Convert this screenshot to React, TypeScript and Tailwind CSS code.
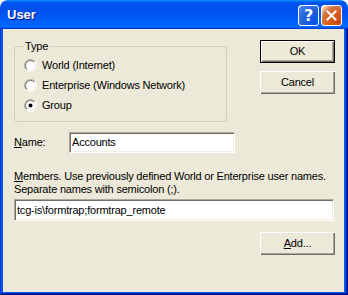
import React from "react";

const font = "font-['Liberation_Sans',Arial,sans-serif]";

const Radio = ({ checked }: { checked?: boolean }) => (
  <svg width="13" height="13" viewBox="0 0 13 13">
    <defs>
      <linearGradient id="ro" x1="0" y1="0" x2="1" y2="1">
        <stop offset="0.45" stopColor="#aca899" />
        <stop offset="0.55" stopColor="#ffffff" />
      </linearGradient>
      <linearGradient id="ri" x1="0" y1="0" x2="1" y2="1">
        <stop offset="0.45" stopColor="#716f64" />
        <stop offset="0.55" stopColor="#f1efe2" />
      </linearGradient>
    </defs>
    <circle cx="6.5" cy="6.5" r="6" fill="none" stroke="url(#ro)" strokeWidth="1" />
    <circle cx="6.5" cy="6.5" r="5" fill="#fff" stroke="url(#ri)" strokeWidth="1" />
    {checked && <circle cx="6.5" cy="6.5" r="2" fill="#000" />}
  </svg>
);

const Button = ({ children, primary }: { children: React.ReactNode; primary?: boolean }) => (
  <div
    className={
      primary
        ? "w-[75px] h-[23px] border border-black bg-[#ece9d8] flex items-center justify-center shadow-[inset_1px_1px_0_#fff,inset_-1px_-1px_0_#716f64,inset_-2px_-2px_0_#aca899]"
        : "w-[75px] h-[23px] bg-[#ece9d8] flex items-center justify-center shadow-[inset_1px_1px_0_#fff,inset_-1px_-1px_0_#716f64,inset_-2px_-2px_0_#aca899]"
    }
  >
    {children}
  </div>
);

const TextBox = ({ value, className }: { value: string; className: string }) => (
  <div
    className={
      "bg-white flex items-center pl-[1px] border border-t-[#aca899] border-l-[#aca899] border-r-white border-b-white shadow-[inset_1px_1px_0_#716f64,inset_-1px_-1px_0_#f1efe2] " +
      className
    }
  >
    <span className="pl-[1px]">{value}</span>
  </div>
);

export default function App() {
  return (
    <div className="w-[348px] h-[295px] bg-white">
      <div className={`w-[348px] h-[295px] flex flex-col rounded-t-[8px] overflow-hidden text-[11px] tracking-[-0.2px] text-black ${font}`}>
        {/* title bar */}
        <div className="h-[29px] flex items-center pl-[7px] pr-[6px] bg-[linear-gradient(180deg,#0997ff,#0053ee_8%,#0050ee_40%,#06f_88%,#06f_93%,#005bff_95%,#003dd7_96%,#003dd7)]">
          <span className="text-white font-bold text-[13px] tracking-normal [text-shadow:1px_1px_#0f1089] mt-[1px]">User</span>
          <div className="ml-auto flex gap-[2px] mt-[2px]">
            <div className="w-[21px] h-[21px] rounded-[3px] border border-white bg-[radial-gradient(circle_at_90%_90%,#0054e9,#2263d5_55%,#4480f4_90%,#fff)] flex items-center justify-center">
              <span className="text-white font-bold text-[16px] leading-none font-['DejaVu_Sans',sans-serif]">?</span>
            </div>
            <div className="w-[21px] h-[21px] rounded-[3px] border border-white bg-[radial-gradient(circle_at_90%_90%,#cc4600,#dc6527_55%,#cd7546_70%,#ffccb2_90%,#fff)] flex items-center justify-center">
              <svg width="11" height="11" viewBox="0 0 11 11">
                <path d="M1.5 1.5 L9.5 9.5 M9.5 1.5 L1.5 9.5" stroke="#fff" strokeWidth="2" strokeLinecap="square" />
              </svg>
            </div>
          </div>
        </div>

        {/* window frame */}
        <div className="flex-1 flex pl-[3px] pr-[4px] pb-[3px] bg-[#0058ee] shadow-[inset_1px_0_0_#0831d9,inset_-1px_-1px_0_#00138c,inset_-2px_-2px_0_#001ea0]">
          <div className="flex-1 bg-[#ece9d8] flex flex-col">
            <div className="flex items-start">
              <fieldset className="ml-[11px] mt-[11px] w-[213px] h-[82px] border border-[#d0d0bf] rounded-[3px]">
                <legend className="ml-[8px] px-[2px] leading-[13px]">Type</legend>
                <div className="pl-[9px] pt-[6px] flex flex-col gap-[7px]">
                  <div className="flex items-center gap-[5px] h-[13px]">
                    <Radio />
                    <span>World (Internet)</span>
                  </div>
                  <div className="flex items-center gap-[5px] h-[13px]">
                    <Radio />
                    <span>Enterprise (Windows Network)</span>
                  </div>
                  <div className="flex items-center gap-[5px] h-[13px]">
                    <Radio checked />
                    <span>Group</span>
                  </div>
                </div>
              </fieldset>
              <div className="ml-auto mr-[9px] mt-[11px] flex flex-col gap-[8px]">
                <Button primary>OK</Button>
                <Button>Cancel</Button>
              </div>
            </div>

            <div className="mt-[10px] ml-[11px] flex items-center">
              <span className="w-[55px]">
                <span className="underline">N</span>ame:
              </span>
              <TextBox value="Accounts" className="w-[166px] h-[21px]" />
            </div>

            <div className="mt-[17px] ml-[11px] leading-[13px]">
              <div>
                <span className="underline">M</span>embers. Use previously defined World or Enterprise user names.
              </div>
              <div>Separate names with semicolon (;).</div>
            </div>

            <TextBox value="tcg-is\formtrap;formtrap_remote" className="mt-[3px] ml-[11px] w-[320px] h-[22px]" />

            <div className="mt-[11px] self-end mr-[9px]">
              <Button>
                <span>
                  <span className="underline">A</span>dd...
                </span>
              </Button>
            </div>
          </div>
        </div>
      </div>
    </div>
  );
}
